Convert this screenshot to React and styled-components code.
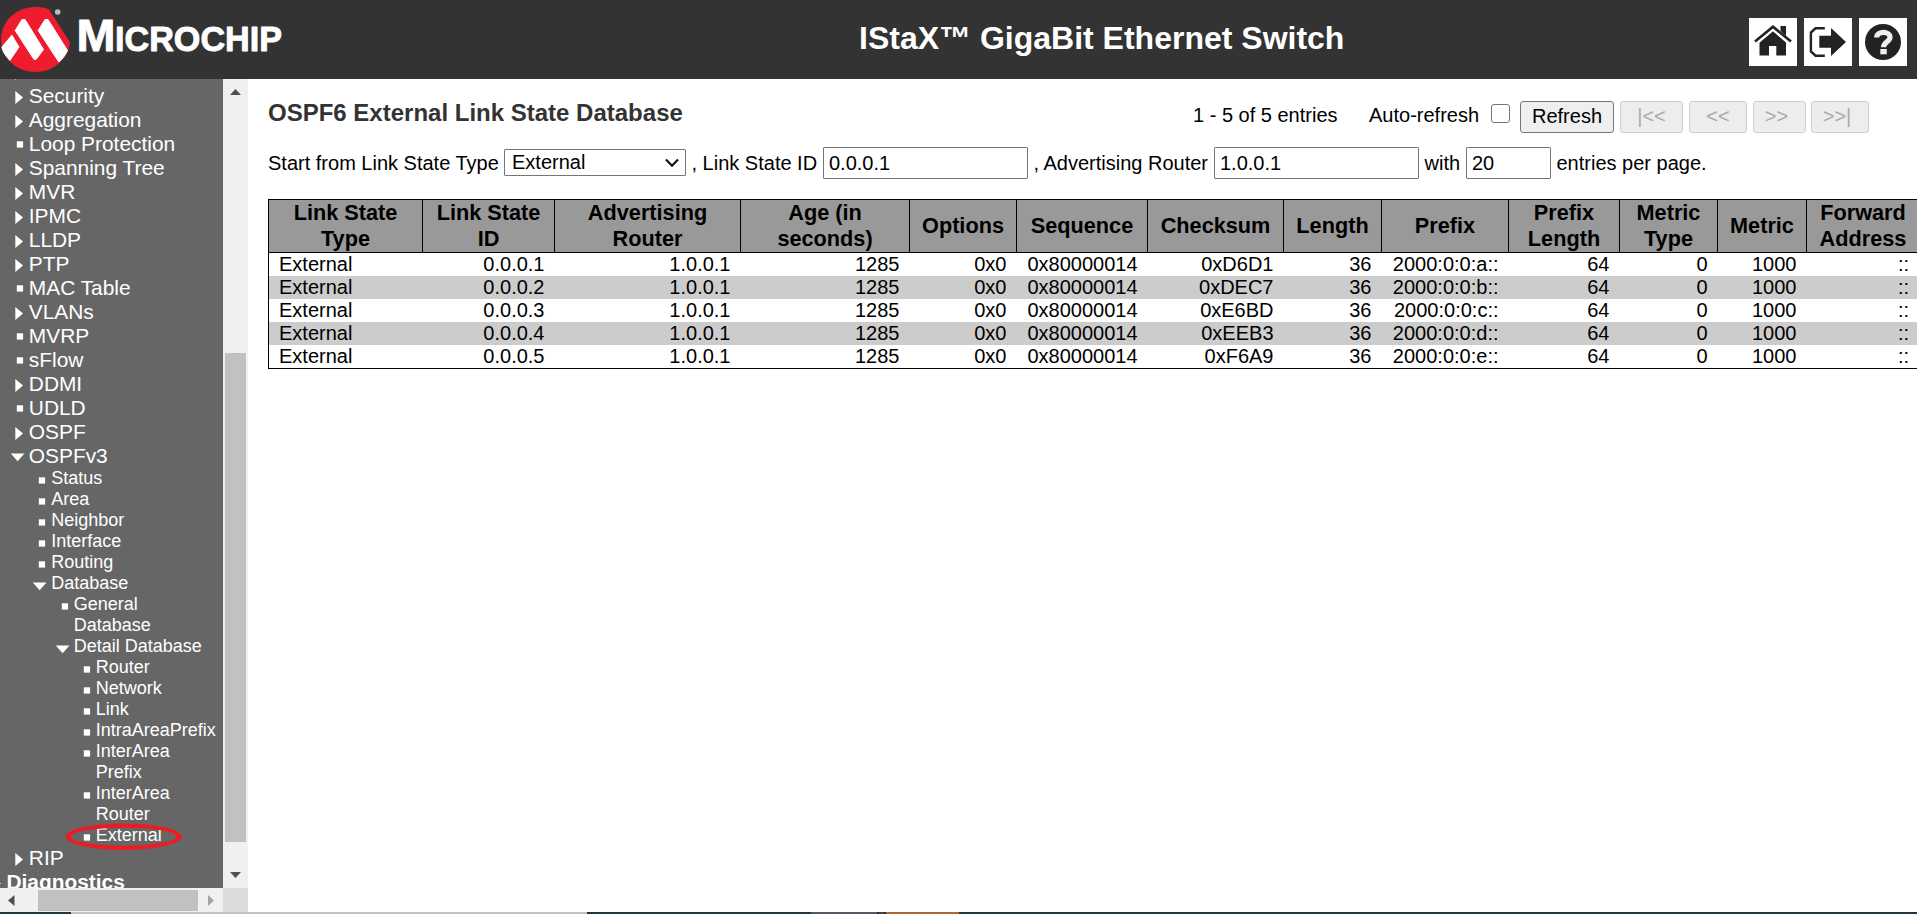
import React from "react";
import styled, { createGlobalStyle } from "styled-components";

const Global = createGlobalStyle`
  html, body { margin: 0; padding: 0; }
  body { background: #fff; overflow: hidden; color: #000; font: 20px/23px "Liberation Sans", Arial, sans-serif; }
  * { box-sizing: border-box; }
`;

const Page = styled.div`
  width: 1917px;
  height: 914px;
  display: grid;
  grid-template-rows: 79px 833px 2px;
  overflow: hidden;
`;

const Header = styled.header`
  background: #333;
  display: grid;
  grid-template-columns: 300px 1fr 168px;
  width: 1917px;
`;

const Title = styled.h1`
  margin: 0;
  padding: 20px 0 0 559px;
  font-size: 32px;
  line-height: 37px;
  font-weight: bold;
  color: #fff;
  white-space: nowrap;
`;

const Tools = styled.div`
  display: flex;
  gap: 7px;
  padding-top: 18px;
`;

const Tool = styled.a`
  width: 48px;
  height: 48px;
  background: #fff;
  svg { display: block; }
`;

const Body = styled.div`
  display: grid;
  grid-template-columns: 248px 1fr;
  min-height: 0;
  min-width: 0;
`;

const SideFrame = styled.aside`
  display: grid;
  grid-template: 809px 24px / 223px 25px;
`;

const Nav = styled.nav`
  position: relative;
  background: #666;
  overflow: hidden;
`;

const List = styled.ul`
  list-style: none;
  margin: -19px 0 0;
  padding: 0;
`;

const Item = styled.li`
  display: flex;
  color: #fff;
  padding-left: ${(p) => p.$x - 20}px;
  font-size: ${(p) => (p.$sub ? 18 : 20.9)}px;
  line-height: ${(p) => (p.$sub ? 21 : 24)}px;
  min-height: ${(p) => (p.$sub ? 21 : 24)}px;
  font-weight: ${(p) => (p.$bold ? "bold" : "normal")};
  white-space: nowrap;
  svg { flex: none; display: block; }
`;

const Section = styled(Item)`
  padding-left: 0;
  margin-left: -14.4px;
`;

const ItemText = styled.span`
  white-space: pre;
  margin-left: 0.8px;
`;

const Circled = styled.svg`
  position: absolute;
  left: 64px;
  top: 743px;
`;

const VBar = styled.div`
  background: #f0f0f0;
  display: flex;
  flex-direction: column;
  align-items: center;
  justify-content: space-between;
  padding: 10px 0;
  svg { display: block; }
`;

const VThumb = styled.div`
  width: 21px;
  height: 489px;
  margin-top: 228px;
  background: #c1c1c1;
`;

const HBar = styled.div`
  background: #f0f0f0;
  display: flex;
  align-items: center;
  padding-left: 8px;
`;

const HThumb = styled.div`
  width: 160px;
  height: 21px;
  margin: 0 10px 0 23px;
  background: #c1c1c1;
`;

const Corner = styled.div`
  background: #dcdcdc;
`;

const Main = styled.main`
  padding: 22px 0 0 20px;
  overflow: hidden;
  min-width: 0;
`;

const TopRow = styled.div`
  display: flex;
  height: 32px;
`;

const Heading = styled.h2`
  margin: -2px 0 0;
  width: 925px;
  height: 27px;
  font-size: 24px;
  line-height: 27px;
  color: #333;
`;

const Count = styled.span`
  width: 176px;
  padding-top: 3px;
`;

const Auto = styled.label`
  width: 151px;
  display: flex;
  padding-top: 3px;
  input {
    appearance: none;
    width: 19px;
    height: 19px;
    margin: 0 0 0 11.5px;
    border: 1px solid #767676;
    border-radius: 3px;
    background: #fff;
  }
`;

const Button = styled.button`
  width: ${(p) => p.$w}px;
  height: 32px;
  margin: 0 ${(p) => p.$gap || 6}px 0 0;
  padding: 0 ${(p) => p.$tail || 0}px 1px 0;
  font: 20px/23px "Liberation Sans", Arial, sans-serif;
  color: #000;
  background: #efefef;
  border: 1px solid #767676;
  border-radius: 3px;
  white-space: nowrap;
  &:disabled {
    color: #aaa;
    background: #ededed;
    border-color: #cfcfcf;
  }
`;

const FilterRow = styled.div`
  display: flex;
  align-items: center;
  height: 32px;
  margin-top: 14px;
`;

const Label = styled.span`
  width: ${(p) => p.$w}px;
  padding-left: ${(p) => (p.$first ? 0 : 5.5)}px;
  white-space: nowrap;
`;

const Field = styled.input`
  width: ${(p) => p.$w}px;
  height: 32px;
  padding: 0 5px;
  border: 1px solid #767676;
  border-radius: 1px;
  font: 20px/23px "Liberation Sans", Arial, sans-serif;
  color: #000;
  background: #fff;
`;

const Select = styled.div`
  width: 182px;
  height: 27px;
  margin-bottom: 1px;
  padding: 0 6px 0 7px;
  border: 1px solid #767676;
  border-radius: 1px;
  display: flex;
  align-items: center;
  justify-content: space-between;
`;

const Table = styled.table`
  margin-top: 20px;
  width: 1651px;
  table-layout: fixed;
  border-collapse: collapse;
  border: 1px solid #000;
`;

const Th = styled.th`
  height: 53px;
  padding: 0 2px;
  background: #999;
  border: 1px solid #000;
  font-size: 21.7px;
  line-height: 26px;
  white-space: pre-line;
`;

const Tr = styled.tr`
  background: ${(p) => (p.$odd ? "#ccc" : "#fff")};
`;

const Td = styled.td`
  height: 23px;
  padding: 0 10px;
  line-height: 23px;
  text-align: ${(p) => (p.$left ? "left" : "right")};
  white-space: nowrap;
`;

const Strip = styled.footer`
  display: flex;
`;

const Seg = styled.div`
  width: ${(p) => p.$w}px;
  background: ${(p) => p.$c};
`;

const Logo = () => (
  <svg width="300" height="79" viewBox="0 0 300 79">
    <path d="M35 7 C40 7 45 7.5 49 9.5 L70 42.5 C68 59 54 72 35 72 C16 72 1 57.5 1 39.5 C1 21.5 16 7 35 7Z" fill="#ee1c2e" />
    <path d="M12 34.5 L19.5 47 L10 61 C5 56 2 51 1.3 47Z" fill="#fff" />
    <path d="M22 19.500 H25 L43.500 49.500 L36 59.500 H34 L15.200 30.500Z" fill="#fff" stroke="#fff" strokeWidth="1" strokeLinejoin="round" />
    <path d="M45 19.500 H48 L67.500 50.500 C65.500 55 62.500 59 58.800 62 L38.200 30.500Z" fill="#fff" stroke="#fff" strokeWidth="1" strokeLinejoin="round" />
    <circle cx="57.700" cy="12" r="2.800" fill="#bbb" />
    <g fill="#fff" stroke="#fff" strokeWidth="0.900" strokeLinejoin="round" fontFamily="Liberation Sans" fontWeight="bold">
      <text x="76.500" y="50.500" fontSize="45" textLength="39" lengthAdjust="spacingAndGlyphs">M</text>
      <text x="115" y="50.500" fontSize="34.500" textLength="167" lengthAdjust="spacingAndGlyphs">ICROCHIP</text>
    </g>
  </svg>
);

const HomeIcon = () => (
  <svg width="48" height="48" viewBox="0 0 48 48" fill="#222">
    <path d="M10.500 24.500 L24 13 L37 24.500 V37.500 H27.300 V28 H20 V37.500 H10.500Z" />
    <path d="M31.500 8 H37 V18 L31.500 13Z" />
    <path d="M8 25.800 L24 12.300 L40 25.800" fill="none" stroke="#fff" strokeWidth="1.500" />
    <path d="M6 23.500 L24 8.800 L42 23.500" fill="none" stroke="#222" strokeWidth="2.600" />
  </svg>
);

const ExitIcon = () => (
  <svg width="48" height="48" viewBox="0 0 48 48" fill="#222">
    <path d="M20.800 10.300 H11.500 L6.900 14.500 V33.500 L11.500 37.700 H20.800" fill="none" stroke="#222" strokeWidth="2.400" />
    <path d="M15.300 17.800 H27 V10 L42 24 L27 38 V29.800 H15.300Z" />
  </svg>
);

const HelpIcon = () => (
  <svg width="48" height="48" viewBox="0 0 48 48">
    <circle cx="24" cy="24" r="18" fill="#222" />
    <path d="M17.700 19.500 C17.700 12.500 31 12.800 31 19.200 C31 23.500 24.500 24 24.500 29.200" fill="none" stroke="#eee" strokeWidth="5.200" />
    <rect x="21.300" y="31" width="6.500" height="5.300" fill="#eee" />
  </svg>
);

const Marker = ({ kind }) => (
  <svg width="20" height="20" viewBox="0 0 20 20" fill="#fff">
    {kind === "r" && <path d="M7.300 7 L15 13.500 L7.300 20Z" />}
    {kind === "d" && <path d="M2.800 9.500 H16.500 L9.600 17.200Z" />}
    {kind === "s" && <rect x="8.800" y="9.300" width="6.300" height="6.300" />}
  </svg>
);

const Arrow = ({ w, h, points, fill = "#505050" }) => (
  <svg width={w} height={h} viewBox={`0 0 ${w} ${h}`}>
    <polygon points={points} fill={fill} />
  </svg>
);

const NAV = [
  ["", "r", 1], ["Security", "r", 1], ["Aggregation", "r", 1], ["Loop Protection", "s", 1],
  ["Spanning Tree", "r", 1], ["MVR", "r", 1], ["IPMC", "r", 1], ["LLDP", "r", 1], ["PTP", "r", 1],
  ["MAC Table", "s", 1], ["VLANs", "r", 1], ["MVRP", "s", 1], ["sFlow", "s", 1], ["DDMI", "r", 1],
  ["UDLD", "s", 1], ["OSPF", "r", 1], ["OSPFv3", "d", 1],
  ["Status", "s", 2], ["Area", "s", 2], ["Neighbor", "s", 2], ["Interface", "s", 2], ["Routing", "s", 2],
  ["Database", "d", 2], ["General\nDatabase", "s", 3], ["Detail Database", "d", 3],
  ["Router", "s", 4], ["Network", "s", 4], ["Link", "s", 4], ["IntraAreaPrefix", "s", 4],
  ["InterArea\nPrefix", "s", 4], ["InterArea\nRouter", "s", 4], ["External", "s", 4],
  ["RIP", "r", 1],
];
const INDENT = [5.6, 28, 50.4, 73, 95];

const COLS = [
  ["Link State\nType", 154], ["Link State\nID", 132], ["Advertising\nRouter", 186], ["Age (in\nseconds)", 169],
  ["Options", 107], ["Sequence", 131], ["Checksum", 136], ["Length", 98], ["Prefix", 127],
  ["Prefix\nLength", 111], ["Metric\nType", 98], ["Metric", 89], ["Forward\nAddress", 113],
];
const ROWS = [["1", "0xD6D1", "a"], ["2", "0xDEC7", "b"], ["3", "0xE6BD", "c"], ["4", "0xEEB3", "d"], ["5", "0xF6A9", "e"]].map(
  ([n, sum, p]) => ["External", `0.0.0.${n}`, "1.0.0.1", "1285", "0x0", "0x80000014", sum, "36", `2000:0:0:${p}::`, "64", "0", "1000", "::"]
);
const STRIP = [
  [71, "#22353f"], [516, "#c4c0c1"], [224, "#22353f"], [66, "#505b66"], [2, "#22303a"], [5, "#3b4853"],
  [2, "#22303a"], [73, "#b0662e"], [958, "#22353f"],
];

export default function App() {
  return (
    <Page>
      <Global />
      <Header>
        <Logo />
        <Title>IStaX™ GigaBit Ethernet Switch</Title>
        <Tools>
          <Tool><HomeIcon /></Tool>
          <Tool><ExitIcon /></Tool>
          <Tool><HelpIcon /></Tool>
        </Tools>
      </Header>
      <Body>
        <SideFrame>
          <Nav>
            <List>
              {NAV.map(([text, kind, level], i) => (
                <Item key={i} $x={INDENT[level]} $sub={level > 1}>
                  <Marker kind={kind} />
                  <ItemText>{text}</ItemText>
                </Item>
              ))}
              <Section $x={20} $bold>
                <Marker kind="r" />
                <ItemText>Diagnostics</ItemText>
              </Section>
            </List>
            <Circled width="120" height="30" viewBox="0 0 120 30">
              <path
                d="M1.500 14.700 a58.200 13.200 0 1 0 116.400 0 a58.200 13.200 0 1 0 -116.400 0Z M7 14.700 a52.700 9 0 1 0 105.400 0 a52.700 9 0 1 0 -105.400 0Z"
                fill="#ed1c24"
                fillRule="evenodd"
              />
            </Circled>
          </Nav>
          <VBar>
            <Arrow w={11} h={6} points="5.5,0 11,6 0,6" />
            <VThumb />
            <Arrow w={11} h={6} points="0,0 11,0 5.5,6" />
          </VBar>
          <HBar>
            <Arrow w={7} h={11} points="6.500,0 6.500,11 0,5.5" />
            <HThumb />
            <Arrow w={6} h={11} points="0,0 6,5.5 0,11" fill="#a3a3a3" />
          </HBar>
          <Corner />
        </SideFrame>
        <Main>
          <TopRow>
            <Heading>OSPF6 External Link State Database</Heading>
            <Count>1 - 5 of 5 entries</Count>
            <Auto>Auto-refresh<input type="checkbox" /></Auto>
            <Button $w={94}>Refresh</Button>
            <Button $w={63} disabled>{"|<<"}</Button>
            <Button $w={58} disabled>{"<<"}</Button>
            <Button $w={53} $tail={6} $gap={5} disabled>{">>"}</Button>
            <Button $w={58} $tail={6} disabled>{">>|"}</Button>
          </TopRow>
          <FilterRow>
            <Label $w={236} $first>Start from Link State Type</Label>
            <Select>
              External
              <svg width="14" height="10" viewBox="0 0 14 10"><path d="M1 1.500 L7 7.700 L13 1.500" fill="none" stroke="#111" strokeWidth="2.200" /></svg>
            </Select>
            <Label $w={137}>, Link State ID</Label>
            <Field $w={205} defaultValue="0.0.0.1" />
            <Label $w={186}>, Advertising Router</Label>
            <Field $w={205} defaultValue="1.0.0.1" />
            <Label $w={47}>with</Label>
            <Field $w={85} defaultValue="20" />
            <Label $w={170}>entries per page.</Label>
          </FilterRow>
          <Table>
            <colgroup>{COLS.map(([, w], i) => <col key={i} width={w} />)}</colgroup>
            <thead><tr>{COLS.map(([t], i) => <Th key={i}>{t}</Th>)}</tr></thead>
            <tbody>
              {ROWS.map((r, i) => (
                <Tr key={i} $odd={i % 2 === 1}>{r.map((c, j) => <Td key={j} $left={j === 0}>{c}</Td>)}</Tr>
              ))}
            </tbody>
          </Table>
        </Main>
      </Body>
      <Strip>{STRIP.map(([w, c], i) => <Seg key={i} $w={w} $c={c} />)}</Strip>
    </Page>
  );
}
